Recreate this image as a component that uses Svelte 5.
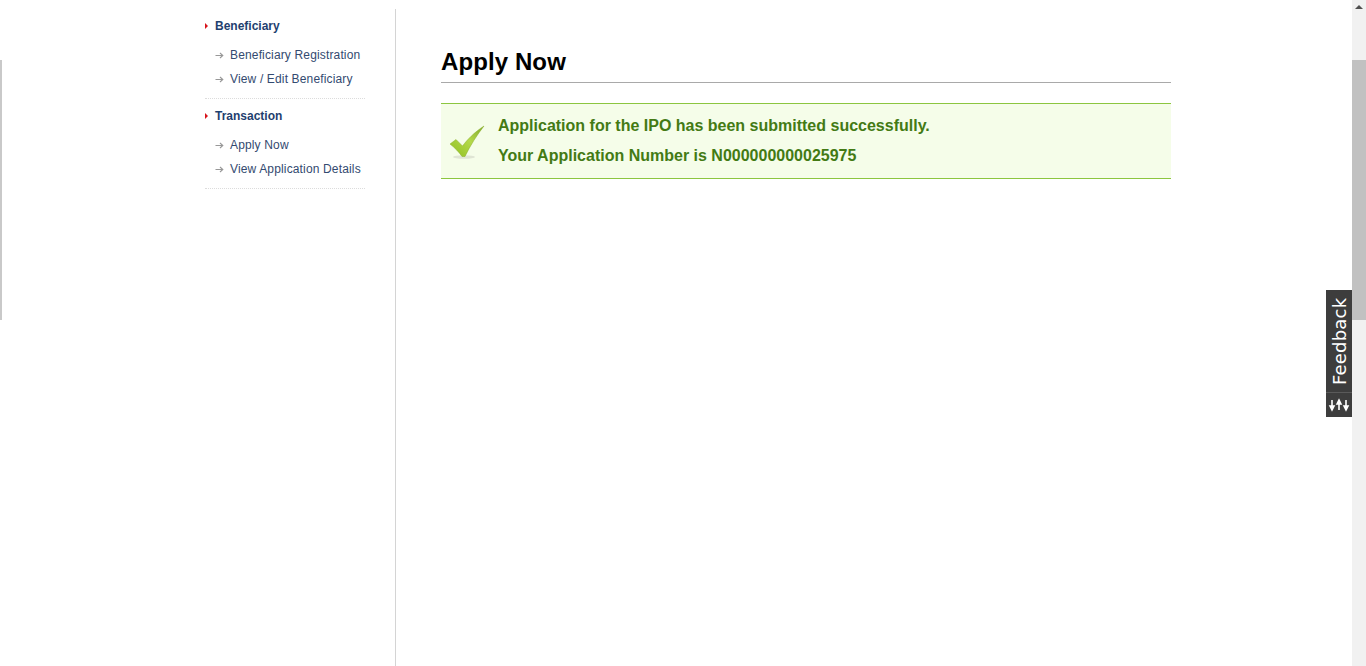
<script>
  const groups = [
    { title: "Beneficiary", links: ["Beneficiary Registration", "View / Edit Beneficiary"] },
    { title: "Transaction", links: ["Apply Now", "View Application Details"] },
  ];
</script>

<div class="page">
  <div class="edge"></div>
  <div class="content">
    <nav class="sidebar">
      {#each groups as group}
        <section class="group">
          <h3><span class="caret"></span>{group.title}</h3>
          <ul>
            {#each group.links as link}
              <li>
                <svg class="arrow" width="9" height="7" viewBox="0 0 9 7">
                  <path d="M0.5 3.5H7.5M5 1L7.8 3.5L5 6" fill="none" stroke="#989898" stroke-width="1.1" />
                </svg>
                <a href="#top">{link}</a>
              </li>
            {/each}
          </ul>
        </section>
      {/each}
    </nav>

    <main class="main">
      <h1>Apply Now</h1>
      <div class="success">
        <svg class="tick" width="36" height="36" viewBox="0 0 36 36">
          <defs>
            <linearGradient id="tickfill" x1="0" y1="1" x2="1" y2="0">
              <stop offset="0" stop-color="#8fbf1f" />
              <stop offset="0.55" stop-color="#b4d94a" />
              <stop offset="1" stop-color="#7fa82a" />
            </linearGradient>
          </defs>
          <ellipse cx="15" cy="32" rx="11" ry="1.8" fill="#dfe5d4" />
          <path d="M1 19L7 14.5L13.5 21C18 15 25 7.5 35 1C28 10 21.5 20 16 31.5H13C10 27 5.5 22.5 1 19Z" fill="url(#tickfill)" stroke="#8aae2c" stroke-width="0.5" />
        </svg>
        <div class="message">
          <p>Application for the IPO has been submitted successfully.</p>
          <p>Your Application Number is N000000000025975</p>
        </div>
      </div>
    </main>
  </div>

  <div class="scrollbar">
    <span class="up"></span>
    <span class="thumb"></span>
  </div>

  <div class="feedback">
    <span class="label">Feedback</span>
    <span class="icon">
      <svg width="22" height="14" viewBox="0 0 22 14">
        <path d="M4 2V10M2 8L4 12L6 8ZM11 12V4M9 6L11 2L13 6ZM18 2V10M16 8L18 12L20 8Z" fill="#fff" stroke="#fff" stroke-width="1.6" />
      </svg>
    </span>
  </div>
</div>

<style>
  :global(body) {
    margin: 0;
    background: #fff;
    overflow: hidden;
  }

  .page {
    position: relative;
    display: flex;
    height: 666px;
    overflow: hidden;
    font-family: "Liberation Sans", Arial, sans-serif;
  }

  .edge {
    flex: none;
    width: 2px;
    height: 260px;
    margin-top: 60px;
    background: #c9c9c9;
  }

  .content {
    flex: 1;
    display: flex;
    padding: 9px 0 0 203px;
  }

  .sidebar {
    flex: none;
    width: 190px;
    height: 100%;
    border-right: 1px solid #d4d4d4;
  }

  .group {
    width: 160px;
    height: 89px;
    border-bottom: 1px dotted #dcdcdc;
  }

  h3 {
    display: flex;
    align-items: center;
    margin: 0;
    padding-top: 10px;
    height: 14px;
    font-size: 12px;
    line-height: 14px;
    font-weight: bold;
    color: #1f3f6f;
  }

  .caret {
    width: 0;
    height: 0;
    margin-right: 7px;
    border-left: 3px solid #d8141c;
    border-top: 3px solid transparent;
    border-bottom: 3px solid transparent;
  }

  ul {
    list-style: none;
    margin: 10px 0 0;
    padding: 0;
  }

  li {
    display: flex;
    align-items: center;
    height: 24px;
    padding-left: 10px;
    white-space: nowrap;
  }

  .arrow {
    flex: none;
    margin-right: 6px;
  }

  a {
    font-size: 12px;
    letter-spacing: 0.15px;
    color: #334a70;
    text-decoration: none;
  }

  .main {
    flex: none;
    width: 730px;
    margin-left: 45px;
  }

  h1 {
    margin: 0;
    padding-top: 37px;
    height: 36px;
    font-size: 24px;
    line-height: 31px;
    letter-spacing: 0.1px;
    font-weight: bold;
    color: #000;
    border-bottom: 1px solid #a9a9a9;
  }

  .success {
    display: flex;
    align-items: center;
    height: 74px;
    margin-top: 20px;
    background: #f5fde9;
    border-top: 1px solid #8cc63f;
    border-bottom: 1px solid #8cc63f;
  }

  .tick {
    flex: none;
    margin: 3px 13px 0 8px;
  }

  .message {
    font-size: 16px;
    font-weight: bold;
    color: #437a14;
  }

  .message p {
    margin: 0;
    line-height: 30px;
  }

  .scrollbar {
    flex: none;
    display: flex;
    flex-direction: column;
    align-items: center;
    width: 14px;
    background: #f1f1f1;
  }

  .up {
    margin-top: 5px;
    width: 0;
    height: 0;
    border-left: 4px solid transparent;
    border-right: 4px solid transparent;
    border-bottom: 4px solid #505050;
  }

  .thumb {
    width: 100%;
    height: 260px;
    margin-top: 51px;
    background: #c1c1c1;
  }

  .feedback {
    position: absolute;
    top: 290px;
    right: 14px;
    width: 26px;
    height: 127px;
    display: flex;
    flex-direction: column;
    background: #3d3d3d;
    color: #fff;
  }

  .label {
    display: flex;
    align-items: center;
    justify-content: center;
    height: 102px;
    writing-mode: vertical-rl;
    transform: rotate(180deg);
    font-family: "DejaVu Sans", sans-serif;
    font-size: 18px;
    letter-spacing: 0.2px;
  }

  .icon {
    display: flex;
    align-items: center;
    justify-content: center;
    flex: 1;
    border-top: 1px solid #5a5a5a;
  }
</style>
